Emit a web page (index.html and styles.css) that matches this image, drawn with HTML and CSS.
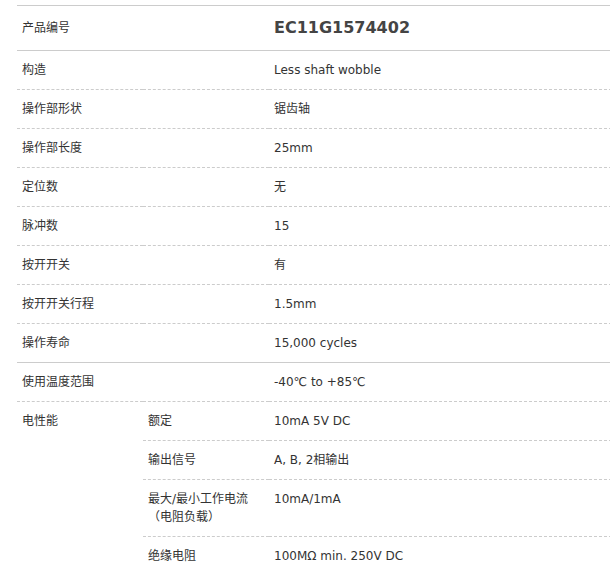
FILE: index.html
```html
<!DOCTYPE html>
<html lang="zh-CN">
<head>
    <meta charset="UTF-8">
    <title>EC11G1574402</title>
    <link rel="stylesheet" href="styles.css">
</head>
<body>
    <table class="spec">
        <colgroup>
            <col class="col-label">
            <col class="col-sub">
            <col>
        </colgroup>
        <tbody>
            <tr class="head">
                <th colspan="2">产品编号</th>
                <td class="part-no">EC11G1574402</td>
            </tr>
            <tr>
                <th colspan="2">构造</th>
                <td>Less shaft wobble</td>
            </tr>
            <tr>
                <th colspan="2">操作部形状</th>
                <td>锯齿轴</td>
            </tr>
            <tr>
                <th colspan="2">操作部长度</th>
                <td>25mm</td>
            </tr>
            <tr>
                <th colspan="2">定位数</th>
                <td>无</td>
            </tr>
            <tr>
                <th colspan="2">脉冲数</th>
                <td>15</td>
            </tr>
            <tr>
                <th colspan="2">按开开关</th>
                <td>有</td>
            </tr>
            <tr>
                <th colspan="2">按开开关行程</th>
                <td>1.5mm</td>
            </tr>
            <tr class="group-end">
                <th colspan="2">操作寿命</th>
                <td>15,000 cycles</td>
            </tr>
            <tr>
                <th colspan="2">使用温度范围</th>
                <td>-40℃ to +85℃</td>
            </tr>
            <tr>
                <th class="group" rowspan="4">电性能</th>
                <th>额定</th>
                <td>10mA 5V DC</td>
            </tr>
            <tr>
                <th>输出信号</th>
                <td>A, B, 2相输出</td>
            </tr>
            <tr>
                <th>最大/最小工作电流<br>（电阻负载）</th>
                <td>10mA/1mA</td>
            </tr>
            <tr>
                <th>绝缘电阻</th>
                <td>100MΩ min. 250V DC</td>
            </tr>
        </tbody>
    </table>
</body>
</html>
```

FILE: styles.css
```css
body {
    margin: 0;
    padding: 5px 0 0 17px;
    background: #fff;
    color: #333;
    font-family: "DejaVu Sans", "Noto Sans CJK SC", sans-serif;
    font-size: 12px;
    overflow: hidden;
}
.spec {
    width: 620px;
    border-collapse: collapse;
    table-layout: fixed;
}
.col-label,
.col-sub {
    width: 126px;
}
.spec th,
.spec td {
    padding: 10px 5px;
    line-height: 18px;
    text-align: left;
    vertical-align: top;
    font-weight: normal;
    border-bottom: 1px dashed #ccc;
}
.spec .head th,
.spec .head td {
    padding: 13px 5px;
    vertical-align: middle;
    border-top: 1px solid #ccc;
    border-bottom: 1px solid #ccc;
}
.spec .head .part-no {
    font-size: 16px;
    font-weight: bold;
    color: #444;
}
.spec .group-end th,
.spec .group-end td {
    border-bottom: 1px solid #ccc;
}
.spec .group {
    border-bottom: none;
}
```
